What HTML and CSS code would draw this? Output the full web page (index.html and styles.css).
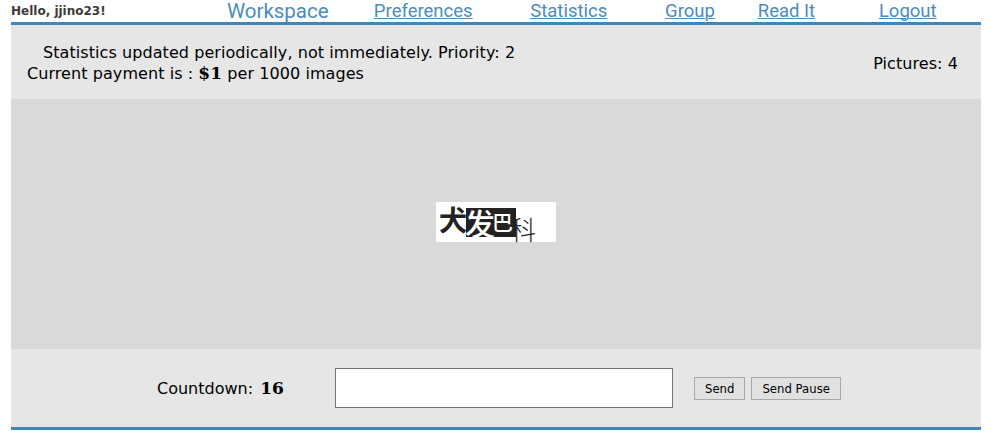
FILE: index.html
```html
<!DOCTYPE html>
<html lang="en">
<head>
<meta charset="utf-8">
<title>Workspace</title>
<link rel="stylesheet" href="styles.css">
</head>
<body>
<div class="page">
  <header class="topbar">
    <div class="hello">Hello, jjino23!</div>
    <nav class="nav">
      <a href="#" class="nav-plain">Workspace</a>
      <a href="#">Preferences</a>
      <a href="#">Statistics</a>
      <a href="#">Group</a>
      <a href="#">Read It</a>
      <a href="#">Logout</a>
    </nav>
  </header>
  <section class="info">
    <div class="info-text">
      <p class="line-indent">Statistics updated periodically, not immediately. Priority: 2</p>
      <p>Current payment is : <b class="serif-bold pay">$1</b> per 1000 images</p>
    </div>
    <div class="pictures">Pictures: 4</div>
  </section>
  <section class="stage">
    <svg class="captcha" width="120" height="40" viewBox="0 0 120 40" role="img" aria-label="captcha">
      <rect width="120" height="40" fill="#fff"/>
      <rect x="30" y="6" width="50" height="29" fill="#222"/>
      <text x="3" y="29" class="cap cap-a">犬</text>
      <text x="29" y="33" class="cap cap-b">发</text>
      <text x="56" y="28" class="cap cap-c">巴</text>
      <text x="74" y="38" class="cap cap-d">科</text>
    </svg>
  </section>
  <section class="answer">
    <div class="countdown">Countdown: <b class="serif-bold count-num">16</b></div>
    <input class="answer-input" type="text" aria-label="answer">
    <div class="buttons">
      <button class="btn" type="button">Send</button>
      <button class="btn" type="button">Send Pause</button>
    </div>
  </section>
</div>
</body>
</html>
```
FILE: styles.css
```css
html, body { margin: 0; padding: 0; background: #fff; }
body { font-family: "DejaVu Sans", Verdana, sans-serif; color: #000; }
.page { width: 970px; margin-left: 11px; }
.topbar {
  display: grid;
  grid-template-columns: 194px 1fr;
  height: 22px;
  border-bottom: 3px solid #3f87bb;
  align-items: center;
}
.hello {
  font-size: 12px;
  font-weight: bold;
  color: #3a3a3a;
  white-space: nowrap;
}
.nav {
  display: grid;
  grid-template-columns: 145.5px 145.5px 145.5px 97px 96px 146.5px;
  justify-items: center;
  font-family: Roboto, sans-serif;
  font-size: 18.5px;
  line-height: 21px;
  white-space: nowrap;
}
.nav a { color: #4a8cbd; text-decoration: underline; text-decoration-thickness: 1px; }
.nav a.nav-plain { text-decoration: none; font-size: 20.5px; }
.info {
  background: #e6e6e6;
  height: 74px;
  box-sizing: border-box;
  display: flex;
  justify-content: space-between;
  align-items: center;
  padding: 2px 23px 0 16px;
  font-size: 16px;
  letter-spacing: 0.07px;
}
.info p { margin: 0; line-height: 21px; }
.info .line-indent { padding-left: 16px; }
.serif-bold { font-family: "DejaVu Serif", serif; font-weight: bold; }
.pay { font-size: 17px; }
.stage {
  background: #d9d9d9;
  height: 250px;
  display: flex;
  align-items: center;
  justify-content: center;
}
.captcha { display: block; margin-bottom: 4px; overflow: visible; }
.cap { font-family: "Noto Sans CJK SC", sans-serif; }
.cap-a { font-size: 28px; font-weight: 700; fill: #222; }
.cap-b { font-size: 30px; font-weight: 500; fill: #fff; }
.cap-c { font-size: 21px; font-weight: 500; fill: #fff; }
.cap-d { font-size: 26px; font-weight: 300; fill: #222; }
.answer {
  background: #e6e6e6;
  height: 78px;
  border-bottom: 3px solid #3f87bb;
  display: flex;
  align-items: center;
  padding-left: 146px;
  font-size: 16px;
}
.countdown { width: 178px; white-space: nowrap; }
.count-num { font-size: 17px; margin-left: 2px; }
.answer-input {
  width: 338px;
  height: 40px;
  box-sizing: border-box;
  border: 1px solid #767676;
  background: #fff;
  padding: 0;
  margin: 0;
}
.buttons { display: flex; gap: 6px; margin-left: 21px; margin-top: 1px; }
.btn {
  height: 23px;
  padding: 0 10px;
  border: 1px solid #a9a9a9;
  background: #e1e1e1;
  color: #000;
  font-family: "DejaVu Sans", Verdana, sans-serif;
  font-size: 11.7px;
}
```
